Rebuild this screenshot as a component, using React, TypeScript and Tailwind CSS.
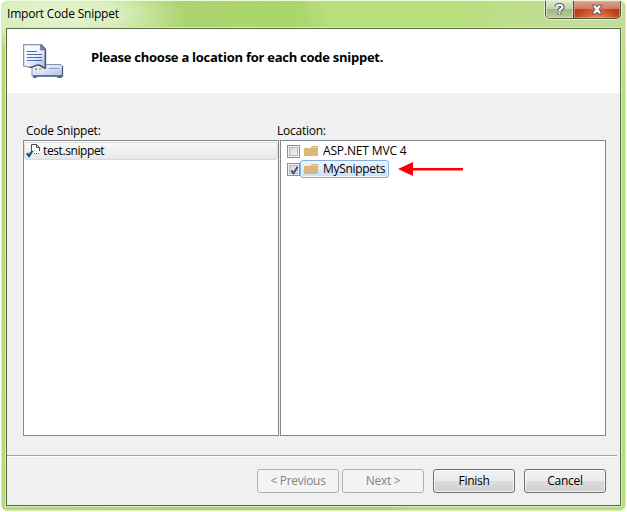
import React from "react";

const UI = "font-['Open_Sans','Noto_Sans',sans-serif] text-[12px] leading-[18px] whitespace-nowrap text-black";

function SnippetServerIcon() {
  return (
    <svg width="42" height="38" viewBox="0 0 42 38" className="shrink-0">
      <defs>
        <linearGradient id="paper" x1="0" y1="0" x2="1" y2="1">
          <stop offset="0" stopColor="#ffffff" />
          <stop offset="0.5" stopColor="#edf2fb" />
          <stop offset="1" stopColor="#a3b6de" />
        </linearGradient>
        <linearGradient id="drive" x1="0" y1="0" x2="1" y2="1">
          <stop offset="0" stopColor="#ffffff" />
          <stop offset="1" stopColor="#b2c1e6" />
        </linearGradient>
      </defs>
      <rect x="10" y="31" width="4" height="3" rx="1" fill="#60697f" />
      <rect x="34" y="31" width="5" height="3" rx="1" fill="#60697f" />
      <path d="M9 22 L11 20.5 H38 L39.5 22 V32 H9 Z" fill="url(#drive)" stroke="#8391b4" />
      <path d="M10 32 H39.5 V22" fill="none" stroke="#4f5e85" strokeWidth="1.3" />
      <path d="M26 24.5 H36" stroke="#8b94b8" />
      <path d="M.6 .7 H18 L22.7 5.5 V24 C20 24.8 19 21.5 16 21.2 C12 20.8 10 23.7 6.5 23.4 C3.5 23 2.5 21.6 .6 22 Z" fill="url(#paper)" stroke="#8796b5" strokeWidth="1.2" />
      <path d="M22.3 6 V24 C20 24.8 19 21.5 16 21.2 C12 20.8 10 23.7 6.5 23.4 M18 .8 L22.6 6" fill="none" stroke="#485270" strokeWidth="1.4" />
      <path d="M17.5 1 V6 H22.5 Z" fill="#7c8cae" stroke="#65718f" strokeWidth=".7" />
      <path d="M4 7.5 H14 M4 10.5 H19 M4 13.5 H19 M4 16.5 H19" stroke="#426eb7" strokeWidth="1.1" />
      <rect x="12" y="24" width="2" height="2" fill="#62ae67" />
      <rect x="16" y="24" width="2" height="2" fill="#dfb649" />
    </svg>
  );
}

function SnippetFileIcon() {
  return (
    <svg width="16" height="16" viewBox="0 0 16 16" className="shrink-0">
      <path d="M5.5 1.5 H11 L13.5 4.5 V11 H5.5 Z" fill="#fff" />
      <path d="M5.5 7.5 V1.5 H10.5 L13.5 4.5 V8" fill="none" stroke="#4c4c4c" />
      <path d="M10.5 1.5 V4.5 H13.5" fill="none" stroke="#4c4c4c" />
      <path d="M8 10.5 H14" stroke="#555" strokeDasharray="1 1" />
      <path d="M.9 10.2 L3 13 L6.5 7.6" fill="none" stroke="#17568f" strokeWidth="2.3" />
    </svg>
  );
}

function Folder() {
  return (
    <svg width="14" height="12" viewBox="0 0 14 12" className="shrink-0">
      <path d="M1 3 H6.5 L8 1 H13 Q14 1 14 2 V11 H0 V4 Q0 3 1 3Z" fill="#dcb67a" />
      <path d="M8.5 2.5 H12.5" stroke="#f0d9b2" />
    </svg>
  );
}

function CheckBox({ checked = false }: { checked?: boolean }) {
  return (
    <span className="grid size-[13px] shrink-0 place-items-center border border-[#8e8f8f] bg-[#f4f4f4]">
      <span className="grid size-[9px] place-items-center border border-[#b5babe] bg-linear-to-br from-[#cfd3d8] to-[#f6f6f6]">
        {checked && (
          <svg width="9" height="9" viewBox="0 0 9 9" className="shrink-0">
            <path d="M1.2 4.3 L3.5 7.2 L7.6 .8" fill="none" stroke="#404f90" strokeWidth="2.1" />
          </svg>
        )}
      </span>
    </span>
  );
}

function PushButton({ label, disabled = false, className = "" }: { label: string; disabled?: boolean; className?: string }) {
  return (
    <button
      disabled={disabled}
      className={`${UI} h-6 w-[82px] shrink-0 rounded-[3px] border pb-px tracking-[-0.3px] ${
        disabled
          ? "border-[#adb2b5] bg-[#f4f4f4] text-[#838383]!"
          : "border-[#707070] bg-[linear-gradient(#f2f2f2_0%,#ebebeb_49%,#dddddd_50%,#cfcfcf_100%)] shadow-[inset_0_0_0_1px_#fafafacc]"
      } ${className}`}
    >
      {label}
    </button>
  );
}

function TitleBar() {
  return (
    <header className="flex h-[27px] shrink-0 items-start justify-between pl-[5px]">
      <h1 className={`${UI} mt-1 tracking-[-0.22px]`}>Import Code Snippet</h1>
      <div className="mr-1 flex h-[18px] w-[76px] overflow-hidden rounded-b-[5px] border border-t-0 border-[#485338] shadow-[0_0_0_1px_#e5f1d2]">
        <button className="grid w-[28px] place-items-center border-r border-[#4b4837] bg-[linear-gradient(#dce8ca_0%,#c2d3aa_48%,#9fb781_50%,#b7ce97_100%)] shadow-[inset_0_0_0_1px_#e3edd2aa]">
          <svg width="11" height="13" viewBox="0 0 11 13">
            <path d="M2.5 4 Q2.5 2 5.5 2 Q8.5 2 8.5 4 Q8.5 5.5 6.3 6.4 Q5.5 6.8 5.5 8.2 M5.5 9.5 V11.5" fill="none" stroke="#555765" strokeWidth="4" />
            <path d="M2.5 4 Q2.5 2 5.5 2 Q8.5 2 8.5 4 Q8.5 5.5 6.3 6.4 Q5.5 6.8 5.5 8.2 M5.5 9.5 V11.3" fill="none" stroke="#fff" strokeWidth="2" />
          </svg>
        </button>
        <button className="grid flex-1 place-items-center bg-[radial-gradient(ellipse_at_50%_110%,#ee8350_0%,transparent_65%),linear-gradient(#dda18e_0%,#cf765f_48%,#b73817_50%,#c34923_100%)] shadow-[inset_0_0_0_1px_#f2bba880]">
          <svg width="12" height="11" viewBox="0 0 12 11">
            <path d="M1 1 H4.5 L6 3 L7.5 1 H11 L8.2 5.4 L11 10 H7.5 L6 8 L4.5 10 H1 L3.8 5.4 Z" fill="#f8f8fa" stroke="#595563" />
          </svg>
        </button>
      </div>
    </header>
  );
}

export default function App() {
  return (
    <main className="h-[512px] w-[627px] overflow-hidden bg-white pl-px">
      <div className="flex h-[511px] w-[625px] flex-col rounded-[6px] border border-[#d9efba] border-t-[#f0fddd] bg-[radial-gradient(ellipse_130px_38px_at_55px_14px,#e8f5d4_0%,#d8eebc_50%,transparent_100%),radial-gradient(ellipse_140px_70px_at_590px_25px,#c5dc9f_0%,transparent_100%),linear-gradient(80deg,#b5dc7c_0%,#add36f_30%,#aad66d_54%,#b7df7b_58%,#b8df7d_100%)]">
        <TitleBar />
        <section className="mx-1 flex h-[478px] flex-col border border-[#586b43] bg-[#f0f0f0] shadow-[0_0_0_1px_#d8edb9]">
          <div className="flex h-16 shrink-0 items-start bg-white pl-4">
            <div className="mt-[15px]"><SnippetServerIcon /></div>
            <h2 className="mt-[19px] ml-[26px] font-['Open_Sans','Noto_Sans',sans-serif] text-[13px] leading-[18px] font-bold tracking-[-0.26px] whitespace-nowrap text-black">Please choose a location for each code snippet.</h2>
          </div>
          <div className="mt-[29px] ml-4 flex gap-px">
            <div className="w-[256px]">
              <div className={`${UI} h-[18px] pl-[3px] tracking-[-0.25px]`}>Code Snippet:</div>
              <div className="h-[296px] border border-[#828790] bg-white pt-px">
                <div className={`${UI} flex h-[18px] items-center rounded-[3px] border border-[#dadada] bg-linear-to-b from-[#fafafa] to-[#e7e7e7] pl-px tracking-[-0.4px]`}>
                  <SnippetFileIcon />
                  <span className="ml-px">test.snippet</span>
                </div>
              </div>
            </div>
            <div className="w-[326px]">
              <div className={`${UI} -ml-[3px] h-[18px] tracking-[-0.25px]`}>Location:</div>
              <div className="h-[296px] border border-[#828790] bg-white pt-px pl-1.5">
                <div className="flex h-[18px] items-center">
                  <CheckBox />
                  <div className={`${UI} flex items-center pl-1 tracking-[-0.15px]`}><Folder /><span className="ml-[5px]">ASP.NET MVC 4</span></div>
                </div>
                <div className="flex h-[18px] items-center">
                  <CheckBox checked />
                  <div className={`${UI} flex h-[18px] w-[89px] items-center rounded-[3px] border border-[#84acdd] bg-linear-to-b from-[#eef5fd] to-[#c7dffb] pl-[3px] tracking-[-0.3px] shadow-[inset_0_0_0_1px_#edf5ff]`}><Folder /><span className="ml-[5px]">MySnippets</span></div>
                </div>
              </div>
            </div>
          </div>
          <div className="mt-[19px] mr-[3px] h-0.5 shrink-0 border-t border-b border-t-[#a0a0a0] border-b-white" />
          <footer className="mt-3 flex justify-end pr-3.5">
            <PushButton label="< Previous" disabled />
            <PushButton label="Next >" disabled className="ml-[3px]" />
            <PushButton label="Finish" className="ml-[9px]" />
            <PushButton label="Cancel" className="ml-[9px]" />
          </footer>
        </section>
      </div>
      <svg width="66" height="14" viewBox="0 0 66 14" className="absolute top-[162px] left-[398px]">
        <path d="M0 7 L15 0 V6 H65 V8.5 H15 V14 Z" fill="#ff0000" />
      </svg>
    </main>
  );
}
